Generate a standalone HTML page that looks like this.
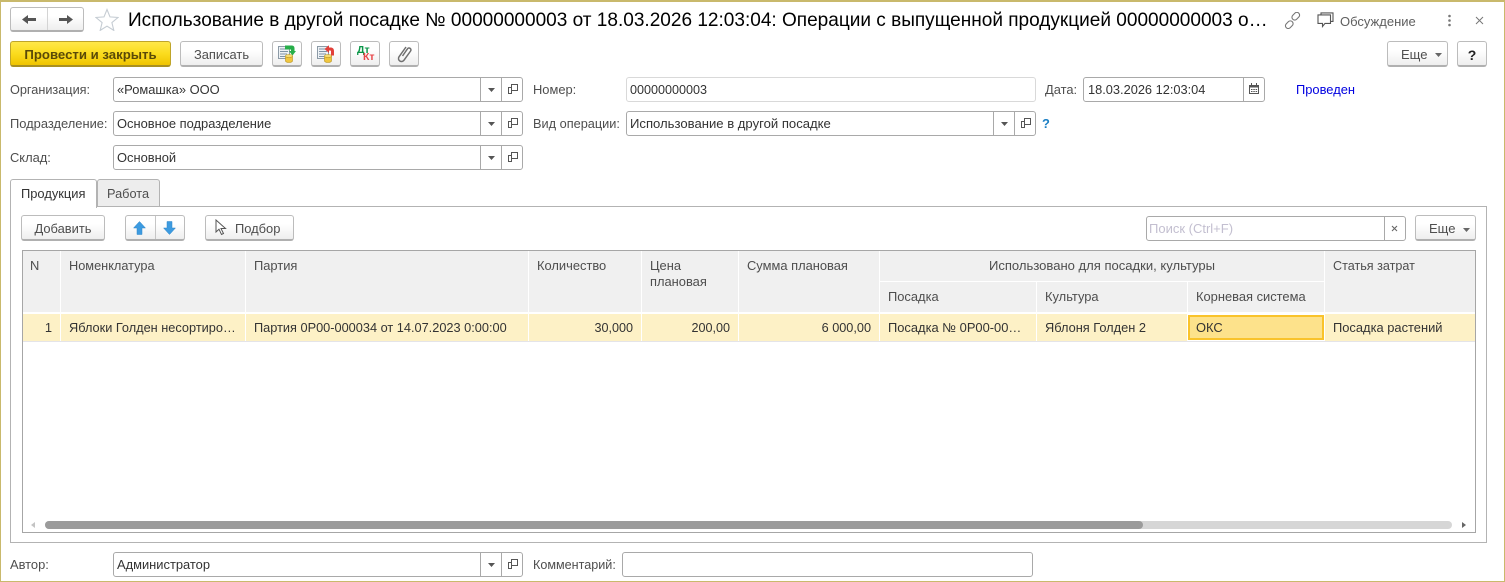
<!DOCTYPE html>
<html lang="ru"><head><meta charset="utf-8"><title>Использование в другой посадке</title>
<style>
*{box-sizing:border-box}
html,body{margin:0;padding:0;background:#fff}
body{width:1505px;height:582px;position:relative;overflow:hidden;font:12.9px "Liberation Sans",Arial,sans-serif;color:#333}
.a{position:absolute}
.t{position:absolute;white-space:nowrap;line-height:16px;height:16px;margin-top:1px}
.l{color:#4e4e4e}
.b{position:absolute;border:1px solid #bcbcbc;border-bottom:2px solid #b0b0b0;border-radius:3px;background:linear-gradient(#fff,#fff 35%,#eeeeee);color:#4e4e4e;text-align:center;white-space:nowrap;line-height:23px}
.f{position:absolute;border:1px solid #a9a9a9;border-radius:3px;background:#fff;height:25px}
.f span{position:absolute;left:3px;top:4px;line-height:16px;white-space:nowrap}
.d{position:absolute;top:0;bottom:0;width:1px;background:#a9a9a9}
.h{position:absolute;background:#f0f0f0}
.c{position:absolute;top:314px;height:27px;background:#fdf1c6}
svg{position:absolute;display:block}
</style></head><body>
<!-- window frame -->
<div class="a" style="left:0;top:0;width:1505px;height:582px;border:1px solid #c9b96c;border-width:2px 1px 1px 1px"></div>

<!-- header -->
<div class="b" style="left:10px;top:7px;width:74px;height:25px"></div>
<div class="a" style="left:47px;top:8px;width:1px;height:22px;background:#d4d4d4"></div>
<svg style="left:22px;top:14px" width="15" height="11" viewBox="0 0 15 11"><path d="M0 5.500 6 1v3h8v3H6v3z" fill="#555"/></svg>
<svg style="left:58px;top:14px" width="15" height="11" viewBox="0 0 15 11"><path d="M15 5.500 9 1v3H1v3h8v3z" fill="#555"/></svg>
<svg style="left:95px;top:8px" width="24" height="23" viewBox="0 0 24 23"><path d="M12 1.500l3 7.400 8 .6-6.100 5.100 1.900 7.800L12 18.200 5.200 22.400l1.900-7.800L1 9.500l8-.6z" fill="#fff" stroke="#c5ccd3" stroke-width="1.100"/></svg>
<div class="t" style="left:128px;top:10px;margin-top:0;height:22px;line-height:22px;font-size:19.05px;color:#000">Использование в другой посадке № 00000000003 от 18.03.2026 12:03:04: Операции с выпущенной продукцией 00000000003 о…</div>
<svg style="left:1284px;top:12px" width="17" height="17" viewBox="0 0 17 17" fill="none" stroke="#777" stroke-width="1.100"><rect x="7.500" y="1.500" width="8.500" height="5.500" rx="2.700" transform="rotate(-45 11.700 4.200)"/><rect x="1" y="10" width="8.500" height="5.500" rx="2.700" transform="rotate(-45 5.200 12.700)"/></svg>
<svg style="left:1317px;top:12px" width="17" height="16" viewBox="0 0 17 16" fill="none" stroke="#555" stroke-width="1.100"><path d="M4 2.500V.9h12v8.500h-2"/><path d="M1 2.900h12.500v8.500H8L5.500 14.500V11.400H1z" fill="#fff"/></svg>
<div class="t l" style="left:1340px;top:13px;color:#5f5f5f;font-size:13px">Обсуждение</div>
<svg style="left:1447px;top:14px" width="5" height="13"><circle cx="2.500" cy="2" r="1.300" fill="#777"/><circle cx="2.500" cy="6.500" r="1.300" fill="#777"/><circle cx="2.500" cy="11" r="1.300" fill="#777"/></svg>
<svg style="left:1475px;top:16px" width="9" height="9" viewBox="0 0 9 9" stroke="#777" stroke-width="1"><path d="M1 1l7 7M8 1 1 8"/></svg>

<!-- command bar -->
<div class="b" style="left:10px;top:41px;width:161px;height:26px;background:linear-gradient(#ffe84a,#fbdc1e 50%,#f0c400);border-color:#bfa52a #bfa52a #a99020;color:#5a4a08;font-weight:bold;font-size:13.2px;line-height:26px">Провести и закрыть</div>
<div class="b" style="left:180px;top:41px;width:83px;height:26px;line-height:26px">Записать</div>
<div class="b" style="left:272px;top:41px;width:30px;height:26px"></div>
<div class="b" style="left:311px;top:41px;width:30px;height:26px"></div>
<div class="b" style="left:350px;top:41px;width:30px;height:26px"></div>
<div class="b" style="left:389px;top:41px;width:30px;height:26px"></div>
<svg style="left:278px;top:45px" width="18" height="18" viewBox="0 0 18 18"><path d="M.5 1.500h11v12H.5z" fill="#eef2f5" stroke="#8c9aa6"/><path d="M2 4h8M2 6.500h8M2 9h7M2 11.500h5" stroke="#7f93a6"/><path d="M7.500 11v5c0 .8 1.700 1.500 3.500 1.500s3.500-.7 3.500-1.500v-5z" fill="#f0c63e" stroke="#b8931f" stroke-width=".6"/><ellipse cx="11" cy="11" rx="3.500" ry="1.500" fill="#f7dc70" stroke="#b8931f" stroke-width=".6"/><path d="M7 .5h6.500c2 0 3 1 3 3V6H18l-3.500 4.500L11 6h2V4.500H7z" fill="#27ae4a"/></svg>
<svg style="left:317px;top:45px" width="18" height="18" viewBox="0 0 18 18"><path d="M.5 1.500h11v12H.5z" fill="#eef2f5" stroke="#8c9aa6"/><path d="M2 4h8M2 6.500h8M2 9h7M2 11.500h5" stroke="#7f93a6"/><path d="M7.500 11v5c0 .8 1.700 1.500 3.500 1.500s3.500-.7 3.500-1.500v-5z" fill="#f0c63e" stroke="#b8931f" stroke-width=".6"/><ellipse cx="11" cy="11" rx="3.500" ry="1.500" fill="#f7dc70" stroke="#b8931f" stroke-width=".6"/><path d="M7.500 4 12 .2v2.300h1.500c2.200 0 3.500 1.300 3.500 3.500v4.500h-3V6.500c0-.7-.4-1-1-1H12V8z" fill="#e2403a"/></svg>
<div class="t" style="left:357px;top:45px;margin-top:0;font-size:10.500px;font-weight:bold;color:#0a9648;line-height:10px;height:10px">Дт</div>
<div class="t" style="left:363px;top:52px;margin-top:0;font-size:10.500px;font-weight:bold;color:#e8474a;line-height:10px;height:10px">Кт</div>
<svg style="left:396px;top:45px" width="17" height="18" viewBox="0 0 17 18" fill="none" stroke="#707070" stroke-width="1.500"><path d="M6.500 11 11.500 3.800a1.900 1.900 0 0 1 3.100 2.200L8 15.200a3 3 0 0 1-5-3.400L10 2"/></svg>
<div class="b" style="left:1387px;top:41px;width:61px;height:26px;line-height:26px;text-align:left;padding-left:13px;font-size:13px">Еще</div>
<svg style="left:1435px;top:53px" width="7" height="4"><path d="M0 0h7L3.500 4z" fill="#666"/></svg>
<div class="b" style="left:1457px;top:41px;width:30px;height:26px;line-height:26px;color:#222;font-weight:bold;font-size:14px">?</div>

<!-- form rows -->
<div class="t l" style="left:10px;top:81px;font-size:12.7px">Организация:</div>
<div class="f" style="left:113px;top:77px;width:410px"><span>«Ромашка» ООО</span><i class="d" style="left:366px"></i><i class="d" style="left:387px"></i></div>
<div class="t l" style="left:10px;top:115px">Подразделение:</div>
<div class="f" style="left:113px;top:111px;width:410px"><span>Основное подразделение</span><i class="d" style="left:366px"></i><i class="d" style="left:387px"></i></div>
<div class="t l" style="left:10px;top:149px">Склад:</div>
<div class="f" style="left:113px;top:145px;width:410px"><span>Основной</span><i class="d" style="left:366px"></i><i class="d" style="left:387px"></i></div>

<svg style="left:488px;top:88px" width="7" height="4"><path d="M0 0h7L3.500 4z" fill="#555"/></svg>
<svg style="left:488px;top:122px" width="7" height="4"><path d="M0 0h7L3.500 4z" fill="#555"/></svg>
<svg style="left:488px;top:156px" width="7" height="4"><path d="M0 0h7L3.500 4z" fill="#555"/></svg>
<svg style="left:508px;top:84px" width="10" height="10" fill="none" stroke="#555"><path d="M3.500.5h6v6h-6zM3.500 3.500H.5v6h3v-3"/></svg>
<svg style="left:508px;top:118px" width="10" height="10" fill="none" stroke="#555"><path d="M3.500.5h6v6h-6zM3.500 3.500H.5v6h3v-3"/></svg>
<svg style="left:508px;top:152px" width="10" height="10" fill="none" stroke="#555"><path d="M3.500.5h6v6h-6zM3.500 3.500H.5v6h3v-3"/></svg>

<div class="t l" style="left:533px;top:81px">Номер:</div>
<div class="f" style="left:626px;top:77px;width:410px;border-color:#d9d9d9"><span style="font-size:12.6px">00000000003</span></div>
<div class="t l" style="left:533px;top:115px;font-size:12.75px">Вид операции:</div>
<div class="f" style="left:626px;top:111px;width:410px"><span style="font-size:13.1px">Использование в другой посадке</span><i class="d" style="left:366px"></i><i class="d" style="left:387px"></i></div>
<svg style="left:1001px;top:122px" width="7" height="4"><path d="M0 0h7L3.500 4z" fill="#555"/></svg>
<svg style="left:1021px;top:118px" width="10" height="10" fill="none" stroke="#555"><path d="M3.500.5h6v6h-6zM3.500 3.500H.5v6h3v-3"/></svg>
<div class="t" style="left:1042px;top:115px;color:#1b7fc4;font-weight:bold">?</div>

<div class="t l" style="left:1045px;top:81px">Дата:</div>
<div class="f" style="left:1083px;top:77px;width:182px"><span style="font-size:12.8px;left:4px">18.03.2026 12:03:04</span><i class="d" style="left:159px"></i></div>
<svg style="left:1249px;top:83px" width="10" height="11" viewBox="0 0 10 11"><path d="M.5 2.500h9v8h-9z" fill="#fff" stroke="#555"/><path d="M0 2h10v2.500H0zM2 0h1v2H2zM7 0h1v2H7z" fill="#555"/><path d="M2 6h1.500v1H2zM4.300 6h1.500v1H4.300zM6.600 6h1.500v1H6.600zM2 8h1.500v1H2zM4.300 8h1.500v1H4.300zM6.600 8h1.500v1H6.600z" fill="#555"/></svg>
<div class="t" style="left:1296px;top:81px;color:#0000e0">Проведен</div>

<!-- tabs & panel -->
<div class="a" style="left:10px;top:206px;width:1477px;height:337px;border:1px solid #b3b3b3"></div>
<div class="a" style="left:97px;top:179px;width:63px;height:28px;background:#ededed;border:1px solid #b3b3b3;border-radius:3px 3px 0 0"></div>
<div class="a" style="left:10px;top:179px;width:87px;height:29px;background:#fff;border:1px solid #b3b3b3;border-bottom:0;border-radius:3px 3px 0 0"></div>
<div class="t" style="left:21px;top:185px;color:#333">Продукция</div>
<div class="t l" style="left:107px;top:185px;font-size:12.75px">Работа</div>

<!-- table toolbar -->
<div class="b" style="left:21px;top:215px;width:84px;height:26px;line-height:26px">Добавить</div>
<div class="b" style="left:125px;top:215px;width:60px;height:26px"></div>
<div class="a" style="left:155px;top:216px;width:1px;height:23px;background:#c6c6c6"></div>
<svg style="left:133px;top:221px" width="13" height="14" viewBox="0 0 13 14"><path d="M6.500.5 12.500 7H9v6.500H4V7H.5z" fill="#3d9be0" stroke="#2e86c9" stroke-width=".5"/></svg>
<svg style="left:163px;top:221px" width="13" height="14" viewBox="0 0 13 14"><path d="M6.500 13.500 12.500 7H9V.5H4V7H.5z" fill="#3d9be0" stroke="#2e86c9" stroke-width=".5"/></svg>
<div class="b" style="left:205px;top:215px;width:89px;height:26px;line-height:26px;text-align:left;padding-left:29px">Подбор</div>
<svg style="left:215px;top:219px" width="12" height="17" viewBox="0 0 12 17"><path d="M1 1v12l3-2.800L6.500 15.500 8.500 14.500 6 9.500h4.500z" fill="#fff" stroke="#555" stroke-width="1"/></svg>

<div class="f" style="left:1146px;top:216px;width:260px;height:25px"><span style="left:2px;color:#c3bfd0;font-size:13px">Поиск (Ctrl+F)</span><i class="d" style="left:237px"></i></div>
<svg style="left:1391px;top:225px" width="7" height="7" stroke="#666" stroke-width="1.100"><path d="M1 1l5 5M6 1 1 6"/></svg>
<div class="b" style="left:1415px;top:215px;width:61px;height:26px;line-height:26px;text-align:left;padding-left:13px;font-size:13px">Еще</div>
<svg style="left:1463px;top:228px" width="7" height="4"><path d="M0 0h7L3.500 4z" fill="#666"/></svg>

<!-- table -->
<div class="a" style="left:22px;top:250px;width:1454px;height:283px;border:1px solid #a6a6a6"></div>
<div class="h" style="left:23px;top:251px;width:37px;height:61px"></div>
<div class="h" style="left:61px;top:251px;width:184px;height:61px"></div>
<div class="h" style="left:246px;top:251px;width:282px;height:61px"></div>
<div class="h" style="left:529px;top:251px;width:112px;height:61px"></div>
<div class="h" style="left:642px;top:251px;width:96px;height:61px"></div>
<div class="h" style="left:739px;top:251px;width:140px;height:61px"></div>
<div class="h" style="left:880px;top:251px;width:444px;height:30px"></div>
<div class="h" style="left:880px;top:282px;width:156px;height:30px"></div>
<div class="h" style="left:1037px;top:282px;width:150px;height:30px"></div>
<div class="h" style="left:1188px;top:282px;width:136px;height:30px"></div>
<div class="h" style="left:1325px;top:251px;width:150px;height:61px"></div>

<div class="t l" style="left:30px;top:257px">N</div>
<div class="t l" style="left:69px;top:257px;font-size:12.75px">Номенклатура</div>
<div class="t l" style="left:254px;top:257px">Партия</div>
<div class="t l" style="left:537px;top:257px">Количество</div>
<div class="t l" style="left:650px;top:257px">Цена</div>
<div class="t l" style="left:650px;top:273px">плановая</div>
<div class="t l" style="left:747px;top:257px">Сумма плановая</div>
<div class="t l" style="left:880px;top:257px;width:444px;text-align:center;font-size:13.05px">Использовано для посадки, культуры</div>
<div class="t l" style="left:888px;top:288px">Посадка</div>
<div class="t l" style="left:1045px;top:288px">Культура</div>
<div class="t l" style="left:1196px;top:288px">Корневая система</div>
<div class="t l" style="left:1333px;top:257px;font-size:12.6px">Статья затрат</div>

<div class="c" style="left:23px;width:37px"></div>
<div class="c" style="left:61px;width:184px"></div>
<div class="c" style="left:246px;width:282px"></div>
<div class="c" style="left:529px;width:112px"></div>
<div class="c" style="left:642px;width:96px"></div>
<div class="c" style="left:739px;width:140px"></div>
<div class="c" style="left:880px;width:156px"></div>
<div class="c" style="left:1037px;width:150px"></div>
<div class="c" style="left:1325px;width:150px"></div>
<div class="a" style="left:1188px;top:315px;width:136px;height:25px;background:#fde28b;border:2px solid #f9c32b"></div>
<div class="a" style="left:23px;top:341px;width:1452px;height:1px;background:#e4e4e8"></div>

<div class="t" style="left:23px;top:319px;width:29px;text-align:right">1</div>
<div class="t" style="left:69px;top:319px;font-size:12.75px">Яблоки Голден несортиро…</div>
<div class="t" style="left:254px;top:319px;font-size:12.75px">Партия 0Р00-000034 от 14.07.2023 0:00:00</div>
<div class="t" style="left:529px;top:319px;width:104px;text-align:right;font-size:12.6px">30,000</div>
<div class="t" style="left:642px;top:319px;width:88px;text-align:right;font-size:12.6px">200,00</div>
<div class="t" style="left:739px;top:319px;width:132px;text-align:right;font-size:12.7px">6 000,00</div>
<div class="t" style="left:888px;top:319px;font-size:12.9px">Посадка № 0Р00-00…</div>
<div class="t" style="left:1045px;top:319px;font-size:12.8px">Яблоня Голден 2</div>
<div class="t" style="left:1196px;top:319px">ОКС</div>
<div class="t" style="left:1333px;top:319px">Посадка растений</div>

<!-- scrollbar -->
<div class="a" style="left:45px;top:521px;width:1407px;height:8px;background:#d6d6d6;border-radius:4px"></div>
<div class="a" style="left:45px;top:521px;width:1098px;height:8px;background:#9b9b9b;border-radius:4px"></div>
<svg style="left:31px;top:522px" width="5" height="6"><path d="M4 0v6L0 3z" fill="#c4c4c4"/></svg>
<svg style="left:1462px;top:522px" width="5" height="6"><path d="M0 0v6l4-3z" fill="#666"/></svg>

<!-- footer -->
<div class="t l" style="left:10px;top:556px">Автор:</div>
<div class="f" style="left:113px;top:552px;width:410px"><span>Администратор</span><i class="d" style="left:366px"></i><i class="d" style="left:387px"></i></div>
<svg style="left:488px;top:563px" width="7" height="4"><path d="M0 0h7L3.500 4z" fill="#555"/></svg>
<svg style="left:508px;top:559px" width="10" height="10" fill="none" stroke="#555"><path d="M3.500.5h6v6h-6zM3.500 3.500H.5v6h3v-3"/></svg>
<div class="t l" style="left:533px;top:556px;font-size:12.6px">Комментарий:</div>
<div class="f" style="left:622px;top:552px;width:411px"></div>
</body></html>
